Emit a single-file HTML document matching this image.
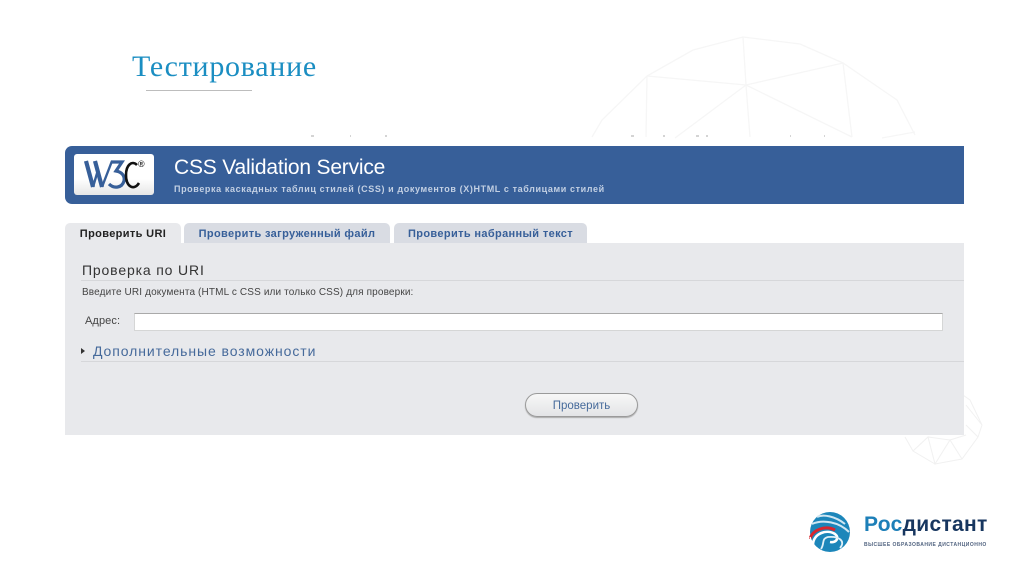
<!DOCTYPE html>
<html lang="ru"><head><meta charset="utf-8"><title>Тестирование</title>
<style>
html,body{margin:0;padding:0;background:#fff}
#p{position:relative;width:1024px;height:574px;overflow:hidden;background:#fff;font-family:"Liberation Sans",sans-serif;filter:blur(.35px)}
#p div{position:absolute;white-space:nowrap}
.tab{top:223px;height:20px;border-radius:5px 5px 0 0;background:#d9dce3;color:#375f99;font-weight:bold;font-size:11px;line-height:22px;text-align:center;letter-spacing:.36px}
</style></head><body>
<div id="p">
<svg style="position:absolute;left:0;top:0" width="1024" height="574" fill="none" stroke="#f6f6f6" stroke-width="1.3">
<path d="M592 137L602 120L647 76L693 50L743 37L800 44L843 63L897 100L915 135"/>
<path d="M647 76L646 137M647 76L746 85L843 63L852 137M743 37L746 85L750 137M746 85L675 138M746 85L852 137M882 138L915 132"/>
<g stroke="#f1f1f1" stroke-width="1">
<path d="M905 437L913 451L935 464L962 459L978 437L982 425L970 400L960 393M913 451L928 437L935 464L950 440L962 459M950 440L966 435M928 437L950 440M966 405L982 425M966 425L978 437"/>
</g>
<g stroke="#aaaaaa" stroke-width="1">
<path d="M311 136h3M350 136h1M385 136h2M631 136h3M663 136h2M696 136h3M706 136h2M790 136h1M824 136h1"/>
</g>
</svg>
<div style="left:132px;top:50px;font:30px/34px 'Liberation Serif',serif;color:#1b8ec2;letter-spacing:.72px">Тестирование</div>
<div style="left:146px;top:90px;width:106px;height:1px;background:#bdbdbd"></div>

<div style="left:65px;top:146px;width:899px;height:58px;background:#375f99;border-radius:7px 0 0 7px"></div>
<div style="left:74px;top:154px;width:80px;height:41px;background:linear-gradient(#fff 60%,#e6e6e6);border-radius:3px"></div>
<svg style="position:absolute;left:74px;top:154px" width="80" height="41" fill="none">
<path d="M12 7L19 33M21 7L28 33" stroke="#375f99" stroke-width="4.2"/>
<path d="M19 33L24 16M28 33L38 7" stroke="#375f99" stroke-width="2.4"/>
<path d="M37 8H48L42 17C48 18 51 22 50 27C48 34 40 35 35 30" stroke="#375f99" stroke-width="3.2"/>
<path d="M63 11C58 6 52 11 52 21C52 33 60 37 65 29" stroke="#111" stroke-width="2.6"/>
<text x="64" y="13" font-size="9" font-weight="bold" fill="#333" font-family="Liberation Sans">®</text>
</svg>
<div style="left:174px;top:155px;font-size:21px;line-height:26px;color:#fff;letter-spacing:-.2px">CSS Validation Service</div>
<div style="left:174px;top:183px;font-size:9px;line-height:13px;color:#c3d0e3;font-weight:bold;letter-spacing:.61px">Проверка каскадных таблиц стилей (CSS) и документов (X)HTML с таблицами стилей</div>

<div class="tab" style="left:65px;width:116px;background:#e8e9ec;color:#222">Проверить URI</div>
<div class="tab" style="left:184px;width:206px">Проверить загруженный файл</div>
<div class="tab" style="left:394px;width:193px">Проверить набранный текст</div>

<div style="left:65px;top:243px;width:899px;height:192px;background:#e8e9ec"></div>
<div style="left:82px;top:261px;font-size:14px;line-height:18px;color:#333;letter-spacing:.85px">Проверка по URI</div>
<div style="left:81px;top:280px;width:883px;height:1px;background:#d6d7da"></div>
<div style="left:82px;top:286px;font-size:10px;line-height:14px;color:#444;letter-spacing:.14px">Введите URI документа (HTML с CSS или только CSS) для проверки:</div>
<div style="left:85px;top:314px;font-size:11px;line-height:14px;color:#444;letter-spacing:.1px">Адрес:</div>
<div style="left:134px;top:313px;width:807px;height:16px;background:#fff;border:1px solid #d5d6d6;border-top:1px solid #a9a9a9"></div>
<div style="left:81px;top:348px;width:0;height:0;border-left:4px solid #333;border-top:3.5px solid transparent;border-bottom:3.5px solid transparent"></div>
<div style="left:93px;top:342px;font-size:14px;line-height:18px;color:#466a9b;letter-spacing:.92px">Дополнительные возможности</div>
<div style="left:81px;top:361px;width:883px;height:1px;background:#d6d7da"></div>
<div style="left:525px;top:393px;width:111px;height:22px;border:1px solid #9a9a9a;border-radius:12px;background:linear-gradient(#f7f7f7,#e3e4e6);box-shadow:0 1px 1px #aaa;text-align:center;font-size:11.5px;line-height:24px;color:#466a9b">Проверить</div>

<svg style="position:absolute;left:809px;top:510px" width="42" height="44" fill="none">
<circle cx="21" cy="22" r="20" fill="#1c86ba"/>
<path d="M8 7C14 4 26 6 36 14M3 14C14 9 30 12 40 22" stroke="#cfe6f2" stroke-width="2"/>
<path d="M1 29C3 20 16 15 26 20" stroke="#d8262e" stroke-width="3"/>
<path d="M4 34C5 23 18 19 26 24C31 28 27 33 21 32" stroke="#fff" stroke-width="2.6"/>
<path d="M12 39C16 33 12 29 19 27C30 26 37 31 31 38" stroke="#dff0f8" stroke-width="1.8"/>
<path d="M1 27C3 37 14 46 28 42" stroke="#fff" stroke-width="1.4"/>
</svg>
<div style="left:864px;top:512px;font-size:21px;line-height:26px;font-weight:bold;color:#1d7fb8;letter-spacing:.3px">Рос<span style="color:#17365f">дистант</span></div>
<div style="left:864px;top:541px;font-size:5px;line-height:8px;font-weight:bold;color:#50627f;letter-spacing:.48px">ВЫСШЕЕ ОБРАЗОВАНИЕ ДИСТАНЦИОННО</div>
</div>
</body></html>
